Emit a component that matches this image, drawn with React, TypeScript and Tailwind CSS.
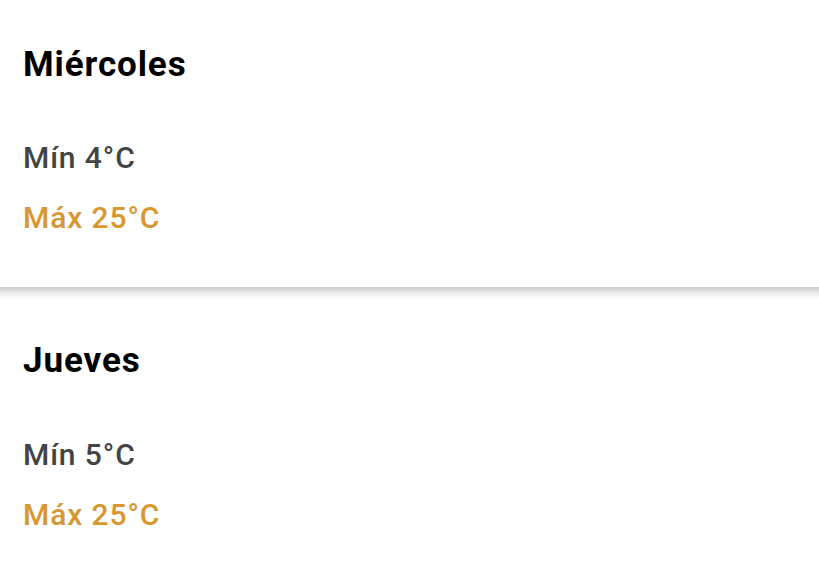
export default function App() {
  const font = { fontFamily: "Roboto, 'Noto Sans', sans-serif" };
  return (
    <div className="w-[819px] h-[570px] bg-white overflow-hidden" style={font}>
      <div className="pl-[23px] pt-[44px] h-[287px]">
        <div className="text-[35px] leading-[42px] font-bold tracking-[0.9px] text-black">Miércoles</div>
        <div className="mt-[54px] text-[30px] leading-[36px] font-medium tracking-[0.9px] text-[#444444]">Mín 4°C</div>
        <div className="mt-[24px] text-[30px] leading-[36px] font-medium tracking-[0.9px] text-[#d8972f]">Máx 25°C</div>
      </div>
      <div className="h-[12px] bg-gradient-to-b from-[#cccccc] via-[#ececec] to-white" />
      <div className="pl-[23px] pt-[41px]">
        <div className="text-[35px] leading-[42px] font-bold tracking-[0.9px] text-black">Jueves</div>
        <div className="mt-[55px] text-[30px] leading-[36px] font-medium tracking-[0.9px] text-[#444444]">Mín 5°C</div>
        <div className="mt-[24px] text-[30px] leading-[36px] font-medium tracking-[0.9px] text-[#d8972f]">Máx 25°C</div>
      </div>
    </div>
  );
}
